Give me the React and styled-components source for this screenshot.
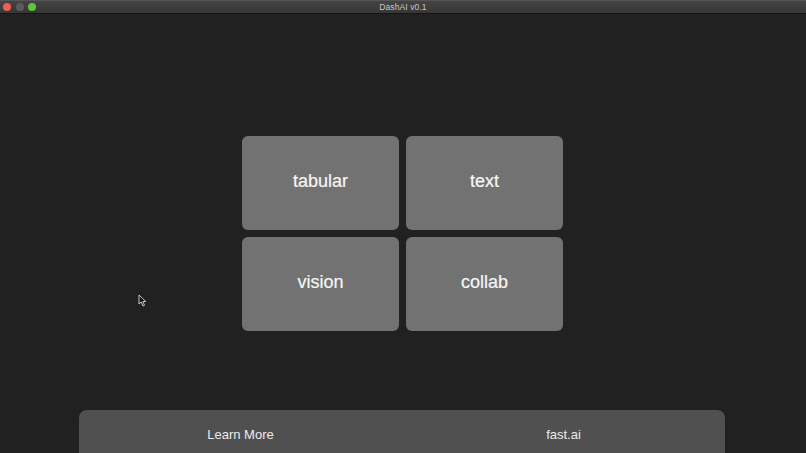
import React from 'react'
import styled, { createGlobalStyle } from 'styled-components'

const GlobalStyle = createGlobalStyle`
  html, body {
    margin: 0;
    padding: 0;
    background: #212121;
    overflow: hidden;
  }
  * { box-sizing: border-box; }
`

const Window = styled.div`
  position: relative;
  width: 806px;
  height: 453px;
  display: flex;
  flex-direction: column;
  background: #212121;
  font-family: "Liberation Sans", Arial, sans-serif;
  overflow: hidden;
`

const TitleBar = styled.div`
  position: relative;
  height: 14px;
  flex-shrink: 0;
  display: flex;
  align-items: center;
  justify-content: center;
  background: linear-gradient(#444444, #363636);
  border-top: 1px solid #555;
  border-bottom: 1px solid #161616;
`

const Lights = styled.div`
  position: absolute;
  left: 3px;
  top: 2px;
  display: flex;
  gap: 4.5px;
`

const Light = styled.span`
  width: 8px;
  height: 8px;
  border-radius: 50%;
  background: ${p => p.color};
`

const Title = styled.span`
  font-size: 8.5px;
  color: #c8c8c8;
  letter-spacing: 0.1px;
`

const Main = styled.main`
  flex: 1;
  display: flex;
  justify-content: center;
  align-items: flex-start;
  padding-top: 122px;
  padding-right: 1px;
`

const Grid = styled.div`
  display: grid;
  grid-template-columns: 157px 157px;
  grid-template-rows: 94px 94px;
  gap: 7px;
`

const Card = styled.button`
  border: none;
  border-radius: 6px;
  background: #727272;
  color: #f6f6f6;
  font-family: inherit;
  font-size: 18px;
  padding: 0 0 3px;
  cursor: pointer;
  display: flex;
  align-items: center;
  justify-content: center;
  -webkit-text-stroke: 0.2px #f6f6f6;
`

const Footer = styled.footer`
  flex-shrink: 0;
  height: 43px;
  margin: 0 81px 0 79px;
  border-radius: 8px 8px 0 0;
  background: #505050;
  display: grid;
  grid-template-columns: 1fr 1fr;
  align-items: center;
`

const FooterLink = styled.a`
  text-align: center;
  color: #ececec;
  font-size: 13px;
  padding-top: 5px;
  text-decoration: none;
  cursor: pointer;
`

const Cursor = styled.svg`
  position: absolute;
  left: 138px;
  top: 294px;
`

const sections = ['tabular', 'text', 'vision', 'collab']

const App = () => {
  return (
    <>
      <GlobalStyle />
      <Window>
        <TitleBar>
          <Lights>
            <Light color="#ee5f57" />
            <Light color="#5a5a5a" />
            <Light color="#5fc33f" />
          </Lights>
          <Title>DashAI v0.1</Title>
        </TitleBar>
        <Main>
          <Grid>
            {sections.map(s => (
              <Card key={s}>{s}</Card>
            ))}
          </Grid>
        </Main>
        <Footer>
          <FooterLink>Learn More</FooterLink>
          <FooterLink>fast.ai</FooterLink>
        </Footer>
        <Cursor width="9" height="13" viewBox="0 0 9 13">
          <path d="M1 1 L1 10 L3.2 8 L5 12 L6.5 11.3 L4.8 7.5 L7.8 7.5 Z" fill="#111" stroke="#d8d8d8" strokeWidth="0.9" strokeLinejoin="round" />
        </Cursor>
      </Window>
    </>
  )
}

export default App
